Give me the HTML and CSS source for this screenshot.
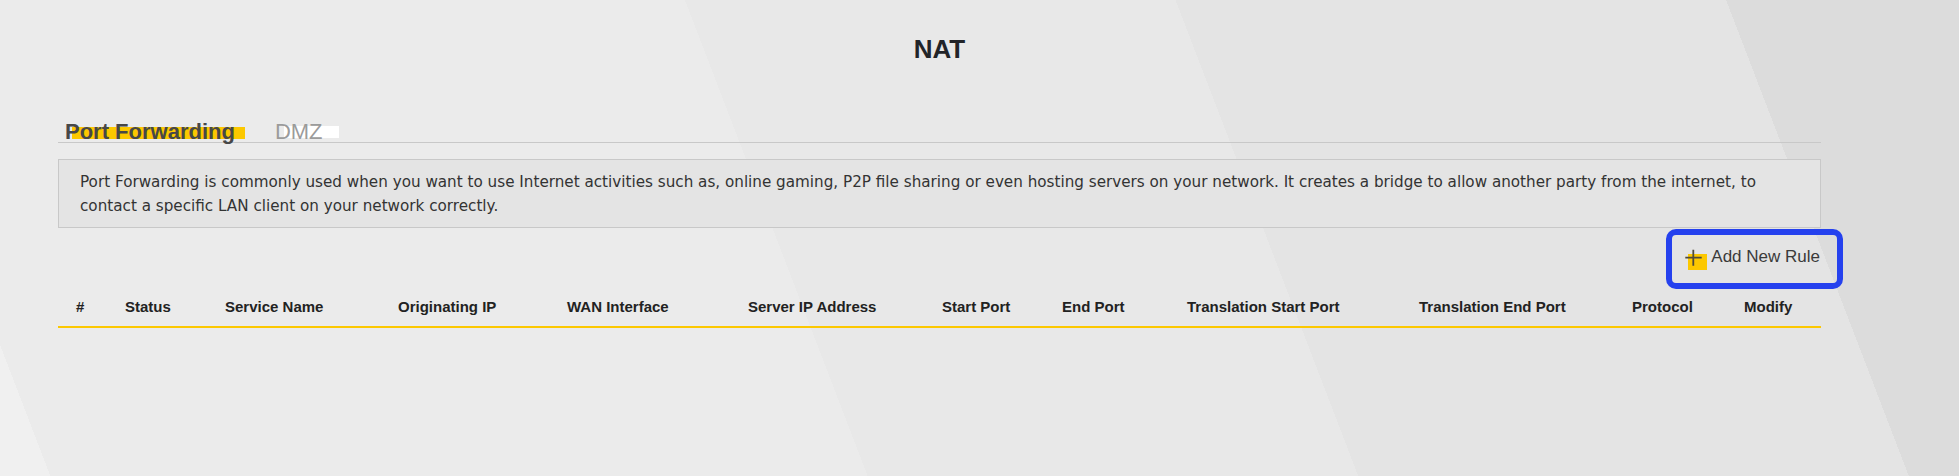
FILE: index.html
```html
<!DOCTYPE html>
<html lang="en">
<head>
<meta charset="utf-8">
<title>NAT</title>
<link rel="stylesheet" href="styles.css">
</head>
<body>
<div class="page">
  <h1 class="title">NAT</h1>
  <div class="tabs">
    <span class="tab tab-active">Port Forwarding</span>
    <span class="tab tab-idle">DMZ</span>
  </div>
  <div class="info">Port Forwarding is commonly used when you want to use Internet activities such as, online gaming, P2P file sharing or even hosting servers on your network. It creates a bridge to allow another party from the internet, to contact a specific LAN client on your network correctly.</div>
  <div class="actions">
    <button class="add-btn" type="button">
      <svg class="add-icon" width="23" height="21" viewBox="0 0 23 21" aria-hidden="true">
        <rect x="3" y="5" width="19" height="16" fill="#fcc800"/>
        <path d="M0.3 8.7H16.7M8.3 0.7V16.7" stroke="#4f4a3a" stroke-width="1.8" fill="none"/>
      </svg>
      <span class="add-label">Add New Rule</span>
    </button>
  </div>
  <div class="thead">
    <div class="th">#</div>
    <div class="th">Status</div>
    <div class="th">Service Name</div>
    <div class="th">Originating IP</div>
    <div class="th">WAN Interface</div>
    <div class="th">Server IP Address</div>
    <div class="th">Start Port</div>
    <div class="th">End Port</div>
    <div class="th">Translation Start Port</div>
    <div class="th">Translation End Port</div>
    <div class="th">Protocol</div>
    <div class="th">Modify</div>
  </div>
</div>
</body>
</html>
```

FILE: styles.css
```css
html {
  height: 100%;
  background: linear-gradient(69deg,
    #f0f0f0 0 47px,
    #ebebeb 47px 810px,
    #e8e8e8 810px 1268px,
    #e4e4e4 1268px 1782px,
    #dcdcdc 1782px);
}

body {
  margin: 0;
}

.page {
  margin-left: 58px;
  width: 1763px;
  padding-top: 34px;
  font-family: "Liberation Sans", Arial, sans-serif;
}

.title {
  margin: 0;
  text-align: center;
  font-size: 26px;
  line-height: 30px;
  font-weight: bold;
  color: #222428;
}

.tabs {
  margin-top: 57px;
  display: flex;
  padding-left: 7px;
  border-bottom: 1px solid #c8c8c8;
  font-size: 22px;
  line-height: 21px;
}

.tab {
  position: relative;
  z-index: 0;
}

.tab + .tab {
  margin-left: 40px;
}

.tab::before {
  content: "";
  position: absolute;
  z-index: -1;
  height: 12px;
}

.tab-active {
  color: #474747;
  font-weight: bold;
}

.tab-active::before {
  left: 7px;
  right: -10px;
  top: 6px;
  background: #fcc800;
}

.tab-idle {
  color: #9b9b9b;
}

.tab-idle::before {
  left: 9px;
  right: -16px;
  top: 5px;
  background: #ffffff;
}

.info {
  margin-top: 16px;
  border: 1px solid #c8c8c8;
  background: #e4e4e4;
  padding: 10px 20px 9px 21px;
  font-family: "DejaVu Sans", "Liberation Sans", sans-serif;
  font-size: 15.2px;
  line-height: 24px;
  color: #333333;
}

.actions {
  display: flex;
  justify-content: flex-end;
  margin-top: 1px;
  margin-right: -22px;
}

.add-btn {
  box-sizing: border-box;
  display: flex;
  align-items: center;
  gap: 3px;
  height: 60px;
  padding: 0 17px 0 13px;
  border: 6px solid #2541ee;
  border-radius: 10px;
  background: transparent;
  font-family: "Liberation Sans", Arial, sans-serif;
  font-size: 17px;
  color: #3a3a3a;
  cursor: pointer;
}

.add-icon {
  display: block;
  flex: none;
}

.add-label {
  margin-bottom: 5px;
}

.thead {
  display: grid;
  grid-template-columns: 49px 100px 173px 169px 181px 194px 120px 125px 232px 213px 112px 1fr;
  padding: 8px 0 9px 18px;
  border-bottom: 2px solid #fcc800;
  font-size: 15px;
  line-height: 20px;
  font-weight: bold;
  color: #222222;
}
```
